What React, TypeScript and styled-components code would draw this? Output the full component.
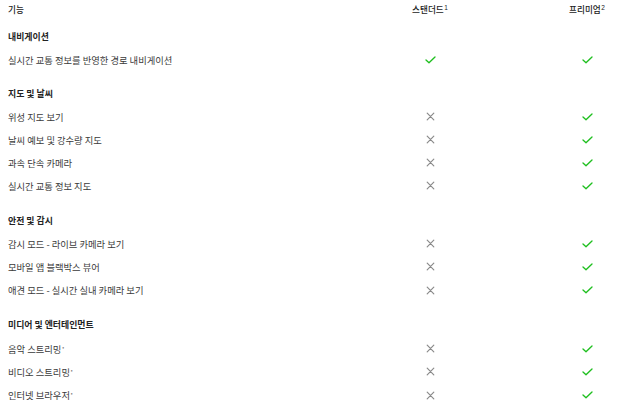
import React from "react";
import styled, { createGlobalStyle } from "styled-components";

const Global = createGlobalStyle`
  html, body { margin: 0; padding: 0; background: #fff; }
  body { font-family: "Noto Sans CJK KR", "Noto Sans", sans-serif; color: #333; }
`;

const Table = styled.div`
  display: grid;
  grid-template-columns: 1fr 80px 50px;
  column-gap: 92px;
  padding: 0 8px;
  width: 620px;
  box-sizing: border-box;
`;

const Row = styled.div<{ $h: number; $mt?: number }>`
  display: contents;
  & > * {
    height: ${(p) => p.$h}px;
    margin-top: ${(p) => p.$mt ?? 0}px;
  }
`;

const Cell = styled.div<{ $center?: boolean }>`
  display: flex;
  align-items: center;
  justify-content: ${(p) => (p.$center ? "center" : "flex-start")};
  font-size: 9.3px;
  font-weight: 400;
  color: #3a3a3a;
  white-space: nowrap;
`;

const SectionCell = styled(Cell)`
  font-size: 8.9px;
  font-weight: 600;
  color: #222;
`;

const HeadCell = styled(Cell)`
  font-size: 8.6px;
  color: #222;
  font-weight: 500;
`;

const Sup = styled.sup`
  font-size: 6.5px;
  font-family: "Liberation Sans", sans-serif;
  line-height: 0;
  position: relative;
  top: -1px;
  margin-left: 0.5px;
`;

const Star = styled.sup`
  font-size: 5px;
  line-height: 0;
  margin-left: 0.5px;
  color: #555;
`;

const Check = () => (
  <svg width="11" height="8" viewBox="0 0 11 8">
    <path d="M1 4 L4 6.7 L10 1" fill="none" stroke="#1fbf1f" strokeWidth="1.35" strokeLinecap="round" strokeLinejoin="round" />
  </svg>
);

const Cross = () => (
  <svg width="9" height="9" viewBox="0 0 9 9">
    <path d="M1.2 1.2 L7.8 7.8 M7.8 1.2 L1.2 7.8" fill="none" stroke="#8a8a8a" strokeWidth="1.2" strokeLinecap="round" />
  </svg>
);

type Item = { label: string; std: boolean; star?: boolean };
type Group = { title: string; items: Item[] };

const groups: Group[] = [
  { title: "내비게이션", items: [{ label: "실시간 교통 정보를 반영한 경로 내비게이션", std: true }] },
  {
    title: "지도 및 날씨",
    items: [
      { label: "위성 지도 보기", std: false },
      { label: "날씨 예보 및 강수량 지도", std: false },
      { label: "과속 단속 카메라", std: false },
      { label: "실시간 교통 정보 지도", std: false },
    ],
  },
  {
    title: "안전 및 감시",
    items: [
      { label: "감시 모드 - 라이브 카메라 보기", std: false },
      { label: "모바일 앱 블랙박스 뷰어", std: false },
      { label: "애견 모드 - 실시간 실내 카메라 보기", std: false },
    ],
  },
  {
    title: "미디어 및 엔터테인먼트",
    items: [
      { label: "음악 스트리밍", std: false, star: true },
      { label: "비디오 스트리밍", std: false, star: true },
      { label: "인터넷 브라우저", std: false, star: true },
    ],
  },
];

export default function App() {
  return (
    <>
      <Global />
      <Table>
        <Row $h={18}>
          <HeadCell>기능</HeadCell>
          <HeadCell $center>
            스탠더드<Sup>1</Sup>
          </HeadCell>
          <HeadCell $center>
            프리미엄<Sup>2</Sup>
          </HeadCell>
        </Row>
        {groups.map((g, gi) => (
          <React.Fragment key={g.title}>
            <Row $h={24} $mt={gi === 0 ? 6 : gi === 1 ? 10 : 11}>
              <SectionCell>{g.title}</SectionCell>
              <Cell />
              <Cell />
            </Row>
            {g.items.map((it) => (
              <Row $h={gi >= 2 ? 23.3 : 23} key={it.label}>
                <Cell>
                  {it.label}
                  {it.star && <Star>*</Star>}
                </Cell>
                <Cell $center>{it.std ? <Check /> : <Cross />}</Cell>
                <Cell $center>
                  <Check />
                </Cell>
              </Row>
            ))}
          </React.Fragment>
        ))}
      </Table>
    </>
  );
}
